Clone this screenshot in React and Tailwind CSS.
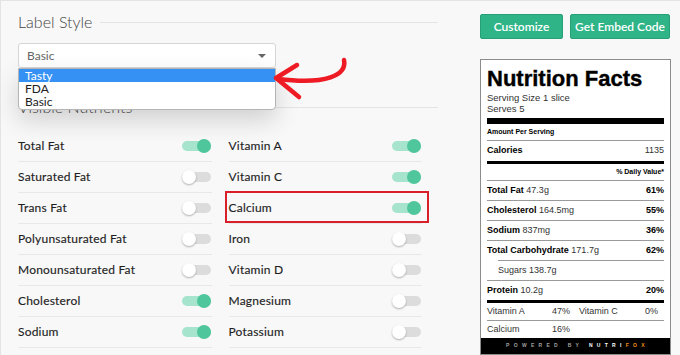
import React from 'react';

const left = [
  ['Total Fat', true],
  ['Saturated Fat', false],
  ['Trans Fat', false],
  ['Polyunsaturated Fat', false],
  ['Monounsaturated Fat', false],
  ['Cholesterol', true],
  ['Sodium', true],
];

const right = [
  ['Vitamin A', true],
  ['Vitamin C', true],
  ['Calcium', true],
  ['Iron', false],
  ['Vitamin D', false],
  ['Magnesium', false],
  ['Potassium', false],
];

const Toggle = ({ on }) => (
  <div className="relative w-[29px] h-[14px] shrink-0">
    <div className={`absolute left-0 right-0 top-[2px] h-[10px] rounded-full ${on ? 'bg-[#a6e4cd]' : 'bg-[#dcdcdc]'}`}></div>
    {on ? (
      <div className="absolute right-0 top-0 w-[14px] h-[14px] rounded-full bg-[#4fc69b]"></div>
    ) : (
      <div className="absolute left-0 top-0 w-[14px] h-[14px] rounded-full bg-white shadow-[0_1px_2px_rgba(0,0,0,0.3)]"></div>
    )}
  </div>
);

const NutrientRow = ({ name, on, boxed }) => (
  <div className="relative h-[31px] flex items-center justify-between border-b border-[#e8e8e8] pr-[1px]">
    <span className="text-[12px] text-[#1f1f1f] tracking-[0.2px] [-webkit-text-stroke:0.15px_#1f1f1f]">{name}</span>
    <Toggle on={on} />
    {boxed && <div className="absolute left-[-4px] right-[-7px] top-[-2px] bottom-0 border-2 border-[#d9202a]"></div>}
  </div>
);

const FactRow = ({ label, value, pct, indent }) => (
  <div className={`h-[20px] flex items-center justify-between border-t border-[#9a9a9a] text-[9px] ${indent ? 'ml-[11px]' : ''}`}>
    <span>
      {indent ? <span className="text-[#333]">{label} </span> : <span className="font-bold text-black">{label} </span>}
      <span className="text-[#333]">{value}</span>
    </span>
    {pct && <span className="font-bold text-black">{pct}</span>}
  </div>
);

export default function App() {
  return (
    <div className="relative w-[680px] h-[355px] overflow-hidden bg-[#f8f8f8] border-t border-l border-[#e4e4e4] flex font-['Lato',sans-serif]">
      {/* Left: settings */}
      <div className="ml-[17px] w-[420px] pt-[11px]">
        <div className="h-[20px] flex items-center gap-[8px]">
          <span className="text-[16px] font-light text-[#444] leading-none">Label Style</span>
          <div className="flex-1 h-px bg-[#e4e4e4]"></div>
        </div>

        <div className="relative mt-[11px] w-[258px]">
          <div className="h-[25px] bg-white border border-[#d6d6d6] rounded-[3px] flex items-center justify-between pl-[8px] pr-[9px]">
            <span className="text-[12px] text-[#666]">Basic</span>
            <span className="w-0 h-0 border-l-[4px] border-r-[4px] border-t-[4px] border-l-transparent border-r-transparent border-t-[#666]"></span>
          </div>
          <div className="absolute left-0 right-0 top-full z-10 bg-white border border-[#b5b5b5] rounded-b-[4px] shadow-[0_10px_24px_rgba(0,0,0,0.16)] text-[12px] text-[#222] leading-[13px] pb-[1px]">
            <div className="bg-[#3592f4] text-white px-[6px]">Tasty</div>
            <div className="px-[6px]">FDA</div>
            <div className="px-[6px]">Basic</div>
          </div>
        </div>

        <div className="mt-[29px] h-[20px] flex items-center gap-[8px]">
          <span className="text-[16px] font-light text-[#444] leading-none">Visible Nutrients</span>
          <div className="flex-1 h-px bg-[#e4e4e4]"></div>
        </div>

        <div className="mt-[14px] w-[404px] grid grid-cols-2 gap-x-[17px]">
          <div>
            {left.map(([n, on]) => <NutrientRow key={n} name={n} on={on} />)}
          </div>
          <div>
            {right.map(([n, on]) => <NutrientRow key={n} name={n} on={on} boxed={n === 'Calcium'} />)}
          </div>
        </div>
      </div>

      {/* Right: actions + label preview */}
      <div className="ml-[42px] w-[191px] pt-[13px]">
        <div className="flex gap-[7px]">
          <button className="w-[83px] h-[25px] bg-[#2fb487] border border-[#28a077] rounded-[2px] text-white text-[12px] font-semibold">Customize</button>
          <button className="w-[100px] h-[25px] bg-[#2fb487] border border-[#28a077] rounded-[2px] text-white text-[12px] font-semibold">Get Embed Code</button>
        </div>

        <div className="mt-[20px] bg-white border border-[#8c8c8c] font-['Liberation_Sans',Arial,sans-serif]">
          <div className="px-[6px] pt-[8px]">
            <div className="h-[22px] text-[22px] leading-[22px] font-black text-black [-webkit-text-stroke:0.4px_black]">Nutrition Facts</div>
            <div className="mt-[2px] text-[9.5px] leading-[11px] text-[#333]">
              <div>Serving Size 1 slice</div>
              <div>Serves 5</div>
            </div>
            <div className="mt-[4px] h-[6px] bg-black"></div>
            <div className="h-[17px] flex items-center border-b border-[#9a9a9a] text-[7px] font-bold text-black">Amount Per Serving</div>
            <div className="h-[20px] flex items-center justify-between text-[9px]">
              <span className="font-bold text-black">Calories</span>
              <span className="text-[#333]">1135</span>
            </div>
            <div className="h-[3px] bg-black"></div>
            <div className="h-[16px] flex items-center justify-end text-[7px] font-bold text-black">% Daily Value*</div>
            <FactRow label="Total Fat" value="47.3g" pct="61%" />
            <FactRow label="Cholesterol" value="164.5mg" pct="55%" />
            <FactRow label="Sodium" value="837mg" pct="36%" />
            <FactRow label="Total Carbohydrate" value="171.7g" pct="62%" />
            <FactRow label="Sugars" value="138.7g" indent />
            <FactRow label="Protein" value="10.2g" pct="20%" />
            <div className="h-[3px] bg-black"></div>
            <div className="h-[17px] flex items-center text-[9px] text-[#333]">
              <span className="w-[65px]">Vitamin A</span>
              <span className="w-[27px]">47%</span>
              <span className="w-[66px]">Vitamin C</span>
              <span>0%</span>
            </div>
            <div className="h-[18px] flex items-center border-t border-[#9a9a9a] text-[9px] text-[#333]">
              <span className="w-[65px]">Calcium</span>
              <span>16%</span>
            </div>
          </div>
          <div className="h-[16px] bg-black flex items-center justify-center text-[5px] font-bold tracking-[4.3px] pl-[4px]">
            <span className="text-[#a0a0a0]">POWERED BY&nbsp;</span>
            <span className="text-white">NUTRI</span>
            <span className="text-[#f5911e]">FOX</span>
          </div>
        </div>
      </div>

      {/* Annotation arrow */}
      <svg className="absolute left-[262px] top-[52px] z-20" width="90" height="52" viewBox="262 52 90 52" fill="none">
        <path d="M343 59 C 346 74, 326 84, 277 78" stroke="#ee1b24" strokeWidth="4.5" strokeLinecap="round" />
        <path d="M296 64 L 275 77 L 298 96" stroke="#ee1b24" strokeWidth="4.5" strokeLinecap="round" strokeLinejoin="round" />
      </svg>
    </div>
  );
}
